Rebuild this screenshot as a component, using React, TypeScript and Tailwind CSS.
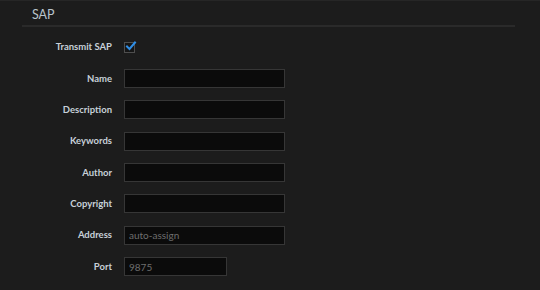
const fields = [
  { label: 'Name', value: '', wide: true },
  { label: 'Description', value: '', wide: true },
  { label: 'Keywords', value: '', wide: true },
  { label: 'Author', value: '', wide: true },
  { label: 'Copyright', value: '', wide: true },
  { label: 'Address', value: 'auto-assign', wide: true },
  { label: 'Port', value: '9875', wide: false },
];

export default function App() {
  return (
    <div
      className="w-[540px] h-[290px] overflow-hidden bg-[#1c1c1c] border-t border-[#262626]"
      style={{ fontFamily: 'Lato, "DejaVu Sans", sans-serif' }}
    >
      <div className="ml-[22px] w-[493px] border-b-2 border-[#2a2a2a] h-[26px] pl-[10px] pt-[7px]">
        <h2 className="text-[12.5px] leading-[14px] text-[#b9c4cc]">SAP</h2>
      </div>

      <div className="mt-[13px]">
        {/* Transmit SAP */}
        <div className="flex items-center h-[14px]">
          <div className="w-[112px] text-right text-[9.5px] font-bold text-[#c7d0d8]">Transmit SAP</div>
          <div className="ml-[12px] relative w-[11px] h-[11px] border border-[#4e4e4e] bg-[#161616]">
            <svg
              className="absolute -top-[2px] left-[0px]"
              width="12"
              height="11"
              viewBox="0 0 12 11"
              fill="none"
            >
              <path d="M2 5.5 L4.5 8 L10 1.5" stroke="#2f8ee6" strokeWidth="2" strokeLinecap="square" />
            </svg>
          </div>
        </div>

        <div className="mt-[9px]">
          {fields.map((f) => (
            <div key={f.label} className="flex items-center h-[31.33px]">
              <div className="w-[112px] text-right text-[9.5px] font-bold text-[#c7d0d8]">{f.label}</div>
              <input
                readOnly
                placeholder={f.value}
                className={`ml-[12px] h-[19px] ${f.wide ? 'w-[161px]' : 'w-[103px]'} bg-[#0b0b0b] border border-[#363636] px-[4px] text-[10px] text-[#d0d0d0] placeholder-[#6e6e6e] outline-none`}
              />
            </div>
          ))}
        </div>
      </div>
    </div>
  );
}
